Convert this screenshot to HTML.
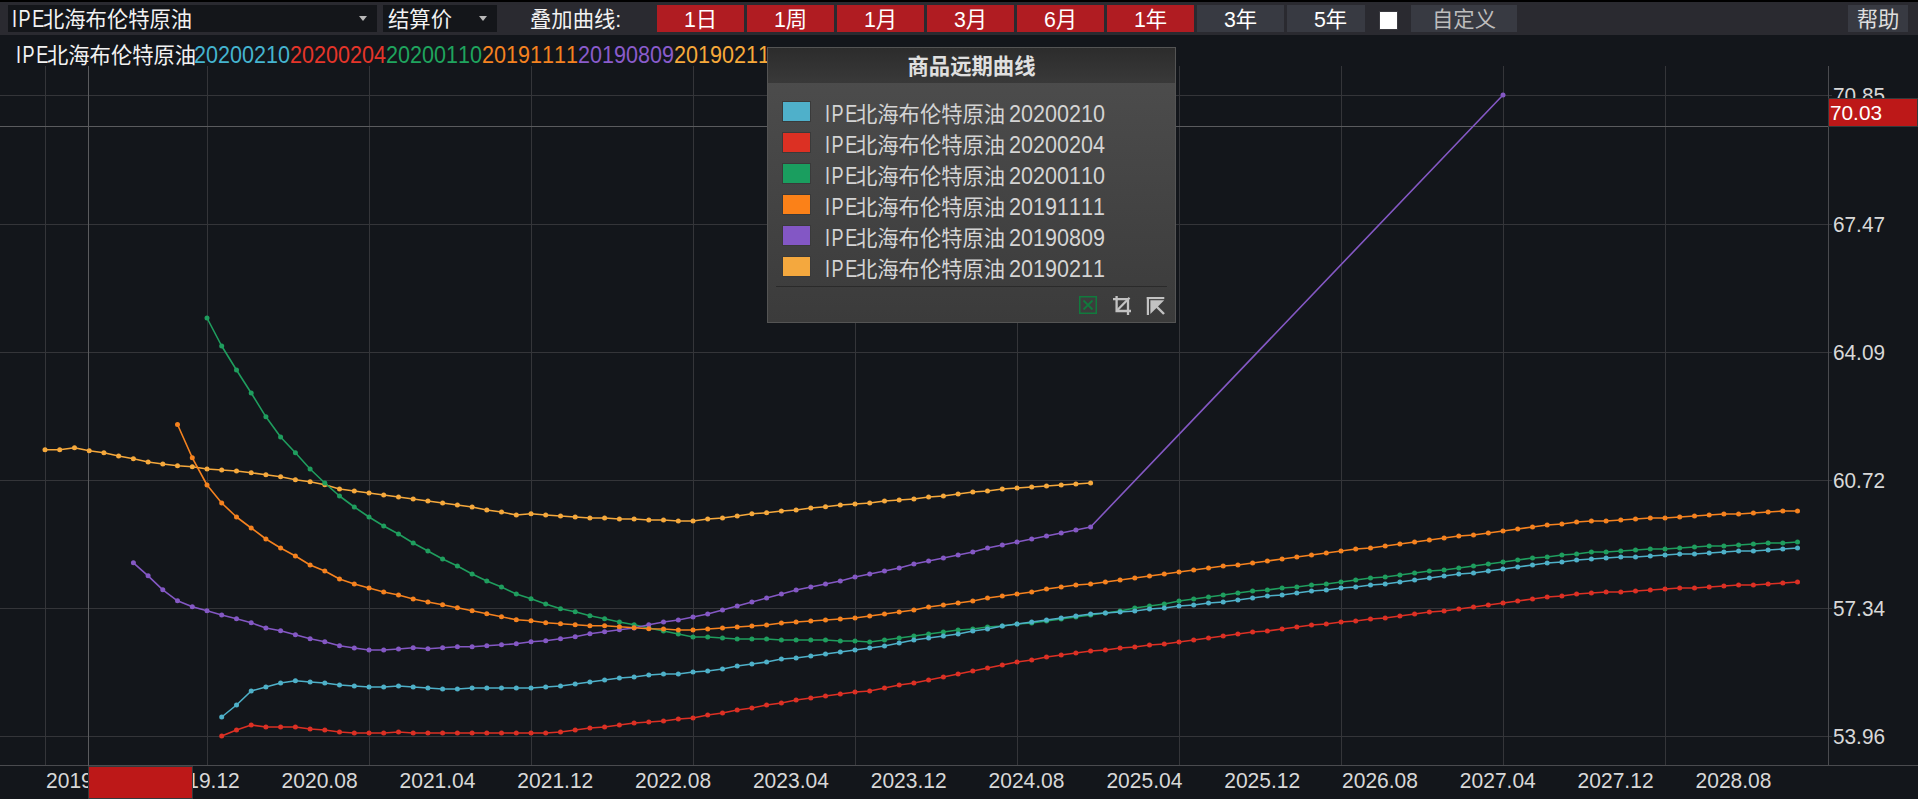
<!DOCTYPE html>
<html lang="zh-CN"><head><meta charset="utf-8"><title>商品远期曲线</title>
<style>

html,body{margin:0;padding:0;}
body{width:1918px;height:799px;overflow:hidden;background:#13161b;position:relative;
 font-family:"Liberation Sans","Noto Sans CJK SC",sans-serif;font-size:21.33px;color:#f2f2f2;font-kerning:none;}
.abs{position:absolute;white-space:nowrap;}
#topline{left:0;top:0;width:1918px;height:2px;background:#000;}
#toolbar{left:0;top:2px;width:1918px;height:33px;background:#2a2a30;}
.dd{background:#14161a;top:5px;height:27px;line-height:31px;}
.btn{top:5px;height:27px;line-height:31px;text-align:center;color:#fff;}
.red{background:#b01c22;}
.gray{background:#383a42;}
.arrow{width:0;height:0;border-left:4.7px solid transparent;border-right:4.7px solid transparent;border-top:5.5px solid #b8b8b8;}
.lbl{top:43px;height:27px;line-height:27px;}
.lat{display:inline-block;font-size:23.5px;letter-spacing:2px;transform:scaleX(.77);transform-origin:0 50%;margin-right:-13px;line-height:1;}
.dt{font-size:23.2px;}
.n{display:inline-block;font-size:23.2px;transform:scaleX(.93);transform-origin:0 50%;margin-right:-7.2px;line-height:1;}

.lg{left:57px;height:31px;line-height:31px;color:#d4d4d4;word-spacing:-2px;}
.sw{left:14px;width:27px;height:19px;border:1px solid #3a3a3a;}
svg text{font-family:"Liberation Sans","Noto Sans CJK SC",sans-serif;font-size:22.2px;font-kerning:none;}

</style></head><body>
<div class="abs" id="topline"></div>
<div class="abs" id="toolbar"></div>
<div class="abs dd" style="left:8px;width:369px;"><span class="abs" id="dd1" style="left:4px;top:0;"><span class="lat">IPE</span>北海布伦特原油</span><div class="abs arrow" style="left:351px;top:11px;"></div></div>
<div class="abs dd" style="left:383px;width:114px;"><span class="abs" id="dd2" style="left:5px;top:0;">结算价</span><div class="abs arrow" style="left:96px;top:11px;"></div></div>
<div class="abs" id="ovl" style="left:530px;top:5px;height:27px;line-height:31px;">叠加曲线:</div>
<div class="abs btn red" style="left:657px;width:87px;">1日</div>
<div class="abs btn red" style="left:747px;width:87px;">1周</div>
<div class="abs btn red" style="left:837px;width:87px;">1月</div>
<div class="abs btn red" style="left:927px;width:87px;">3月</div>
<div class="abs btn red" style="left:1017px;width:87px;">6月</div>
<div class="abs btn red" style="left:1107px;width:87px;">1年</div>
<div class="abs btn gray" style="left:1197px;width:87px;">3年</div>
<div class="abs btn gray" style="left:1287px;width:78px;overflow:hidden;"><div style="width:87px;">5年</div></div>
<div class="abs" style="left:1380px;top:12px;width:17px;height:17px;background:#fff;box-shadow:0 0 0 1px #3a3a40;"></div>
<div class="abs btn gray" style="left:1411px;width:106px;color:#bdbdbd;">自定义</div>
<div class="abs btn gray" style="left:1848px;width:60px;color:#dedede;">帮助</div>
<svg class="abs" style="left:0;top:0;" width="1918" height="799" viewBox="0 0 1918 799">
<rect x="45" y="66" width="1" height="700" fill="#343539"/>
<rect x="207" y="66" width="1" height="700" fill="#343539"/>
<rect x="369" y="66" width="1" height="700" fill="#343539"/>
<rect x="531" y="66" width="1" height="700" fill="#343539"/>
<rect x="693" y="66" width="1" height="700" fill="#343539"/>
<rect x="855" y="66" width="1" height="700" fill="#343539"/>
<rect x="1017" y="66" width="1" height="700" fill="#343539"/>
<rect x="1179" y="66" width="1" height="700" fill="#343539"/>
<rect x="1341" y="66" width="1" height="700" fill="#343539"/>
<rect x="1503" y="66" width="1" height="700" fill="#343539"/>
<rect x="1665" y="66" width="1" height="700" fill="#343539"/>
<rect x="0" y="95" width="1832" height="1" fill="#343539"/>
<rect x="0" y="224" width="1832" height="1" fill="#343539"/>
<rect x="0" y="352" width="1832" height="1" fill="#343539"/>
<rect x="0" y="480" width="1832" height="1" fill="#343539"/>
<rect x="0" y="608" width="1832" height="1" fill="#343539"/>
<rect x="0" y="736" width="1832" height="1" fill="#343539"/>
<rect x="1828" y="66" width="1" height="700" fill="#4a4b4f"/>
<rect x="0" y="765" width="1918" height="1" fill="#4a4b4f"/>
<rect x="88" y="66" width="1" height="700" fill="#5a5b5e"/>
<rect x="0" y="126" width="1829" height="1" fill="#5a5b5e"/>
<g fill="#f5a83c" stroke="none"><polyline points="45.0,449.8 59.7,449.8 74.5,447.8 89.2,450.8 103.9,452.8 118.6,456.0 133.4,458.8 148.1,462.0 162.8,464.0 177.5,465.8 192.3,466.8 207.0,469.0 221.7,470.0 236.5,471.0 251.2,472.8 265.9,474.8 280.6,476.8 295.4,479.8 310.1,481.8 324.8,484.8 339.5,489.0 354.3,491.0 369.0,493.0 383.7,495.0 398.5,497.0 413.2,499.0 427.9,501.0 442.6,503.0 457.4,505.0 472.1,507.0 486.8,510.0 501.5,512.0 516.3,515.0 531.0,513.8 545.7,515.0 560.5,516.0 575.2,517.0 589.9,518.0 604.6,518.0 619.4,519.0 634.1,519.0 648.8,520.0 663.5,520.0 678.3,521.0 693.0,521.0 707.7,519.0 722.5,518.0 737.2,516.0 751.9,513.8 766.6,512.8 781.4,511.0 796.1,510.0 810.8,508.0 825.5,506.8 840.3,505.0 855.0,504.0 869.7,503.0 884.5,501.0 899.2,500.0 913.9,499.0 928.6,497.0 943.4,496.0 958.1,494.0 972.8,492.0 987.5,491.0 1002.3,489.0 1017.0,488.0 1031.7,487.0 1046.5,486.0 1061.2,485.0 1075.9,484.0 1090.6,483.0" fill="none" stroke="#f5a83c" stroke-width="1.6" stroke-linejoin="round"/>
<circle cx="45.0" cy="449.8" r="2.5"/><circle cx="59.7" cy="449.8" r="2.5"/><circle cx="74.5" cy="447.8" r="2.5"/><circle cx="89.2" cy="450.8" r="2.5"/><circle cx="103.9" cy="452.8" r="2.5"/><circle cx="118.6" cy="456.0" r="2.5"/><circle cx="133.4" cy="458.8" r="2.5"/><circle cx="148.1" cy="462.0" r="2.5"/><circle cx="162.8" cy="464.0" r="2.5"/><circle cx="177.5" cy="465.8" r="2.5"/><circle cx="192.3" cy="466.8" r="2.5"/><circle cx="207.0" cy="469.0" r="2.5"/><circle cx="221.7" cy="470.0" r="2.5"/><circle cx="236.5" cy="471.0" r="2.5"/><circle cx="251.2" cy="472.8" r="2.5"/><circle cx="265.9" cy="474.8" r="2.5"/><circle cx="280.6" cy="476.8" r="2.5"/><circle cx="295.4" cy="479.8" r="2.5"/><circle cx="310.1" cy="481.8" r="2.5"/><circle cx="324.8" cy="484.8" r="2.5"/><circle cx="339.5" cy="489.0" r="2.5"/><circle cx="354.3" cy="491.0" r="2.5"/><circle cx="369.0" cy="493.0" r="2.5"/><circle cx="383.7" cy="495.0" r="2.5"/><circle cx="398.5" cy="497.0" r="2.5"/><circle cx="413.2" cy="499.0" r="2.5"/><circle cx="427.9" cy="501.0" r="2.5"/><circle cx="442.6" cy="503.0" r="2.5"/><circle cx="457.4" cy="505.0" r="2.5"/><circle cx="472.1" cy="507.0" r="2.5"/><circle cx="486.8" cy="510.0" r="2.5"/><circle cx="501.5" cy="512.0" r="2.5"/><circle cx="516.3" cy="515.0" r="2.5"/><circle cx="531.0" cy="513.8" r="2.5"/><circle cx="545.7" cy="515.0" r="2.5"/><circle cx="560.5" cy="516.0" r="2.5"/><circle cx="575.2" cy="517.0" r="2.5"/><circle cx="589.9" cy="518.0" r="2.5"/><circle cx="604.6" cy="518.0" r="2.5"/><circle cx="619.4" cy="519.0" r="2.5"/><circle cx="634.1" cy="519.0" r="2.5"/><circle cx="648.8" cy="520.0" r="2.5"/><circle cx="663.5" cy="520.0" r="2.5"/><circle cx="678.3" cy="521.0" r="2.5"/><circle cx="693.0" cy="521.0" r="2.5"/><circle cx="707.7" cy="519.0" r="2.5"/><circle cx="722.5" cy="518.0" r="2.5"/><circle cx="737.2" cy="516.0" r="2.5"/><circle cx="751.9" cy="513.8" r="2.5"/><circle cx="766.6" cy="512.8" r="2.5"/><circle cx="781.4" cy="511.0" r="2.5"/><circle cx="796.1" cy="510.0" r="2.5"/><circle cx="810.8" cy="508.0" r="2.5"/><circle cx="825.5" cy="506.8" r="2.5"/><circle cx="840.3" cy="505.0" r="2.5"/><circle cx="855.0" cy="504.0" r="2.5"/><circle cx="869.7" cy="503.0" r="2.5"/><circle cx="884.5" cy="501.0" r="2.5"/><circle cx="899.2" cy="500.0" r="2.5"/><circle cx="913.9" cy="499.0" r="2.5"/><circle cx="928.6" cy="497.0" r="2.5"/><circle cx="943.4" cy="496.0" r="2.5"/><circle cx="958.1" cy="494.0" r="2.5"/><circle cx="972.8" cy="492.0" r="2.5"/><circle cx="987.5" cy="491.0" r="2.5"/><circle cx="1002.3" cy="489.0" r="2.5"/><circle cx="1017.0" cy="488.0" r="2.5"/><circle cx="1031.7" cy="487.0" r="2.5"/><circle cx="1046.5" cy="486.0" r="2.5"/><circle cx="1061.2" cy="485.0" r="2.5"/><circle cx="1075.9" cy="484.0" r="2.5"/><circle cx="1090.6" cy="483.0" r="2.5"/>
</g>
<g fill="#1f9d5e" stroke="none"><polyline points="207.0,318.0 221.7,346.0 236.5,370.0 251.2,393.0 265.9,416.8 280.6,437.0 295.4,452.8 310.1,469.0 324.8,483.0 339.5,496.0 354.3,507.0 369.0,517.0 383.7,526.0 398.5,534.0 413.2,543.0 427.9,551.0 442.6,559.0 457.4,566.0 472.1,574.0 486.8,581.0 501.5,587.0 516.3,594.0 531.0,598.8 545.7,604.0 560.5,608.8 575.2,611.8 589.9,615.8 604.6,618.8 619.4,622.0 634.1,624.8 648.8,628.0 663.5,631.0 678.3,634.0 693.0,637.0 707.7,637.0 722.5,638.0 737.2,639.0 751.9,639.0 766.6,639.0 781.4,640.0 796.1,640.0 810.8,640.0 825.5,640.0 840.3,641.0 855.0,641.0 869.7,642.0 884.5,640.0 899.2,638.0 913.9,636.0 928.6,634.0 943.4,632.0 958.1,630.0 972.8,629.0 987.5,627.0 1002.3,626.0 1017.0,624.0 1031.7,623.0 1046.5,621.0 1061.2,619.0 1075.9,617.0 1090.6,615.0 1105.4,613.0 1120.1,611.0 1134.8,608.0 1149.5,606.0 1164.3,604.0 1179.0,601.0 1193.7,599.0 1208.5,597.0 1223.2,595.0 1237.9,593.0 1252.6,591.0 1267.4,590.0 1282.1,588.0 1296.8,587.0 1311.5,585.0 1326.3,584.0 1341.0,582.0 1355.7,580.0 1370.5,578.0 1385.2,577.0 1399.9,575.0 1414.6,573.0 1429.4,571.0 1444.1,570.0 1458.8,568.0 1473.5,566.0 1488.3,564.0 1503.0,562.0 1517.7,560.0 1532.5,558.0 1547.2,557.0 1561.9,555.0 1576.6,554.0 1591.4,552.0 1606.1,552.0 1620.8,551.0 1635.5,550.0 1650.3,549.0 1665.0,549.0 1679.7,548.0 1694.5,547.0 1709.2,546.0 1723.9,546.0 1738.6,545.0 1753.4,544.0 1768.1,543.0 1782.8,543.0 1797.5,542.0" fill="none" stroke="#1f9d5e" stroke-width="1.6" stroke-linejoin="round"/>
<circle cx="207.0" cy="318.0" r="2.5"/><circle cx="221.7" cy="346.0" r="2.5"/><circle cx="236.5" cy="370.0" r="2.5"/><circle cx="251.2" cy="393.0" r="2.5"/><circle cx="265.9" cy="416.8" r="2.5"/><circle cx="280.6" cy="437.0" r="2.5"/><circle cx="295.4" cy="452.8" r="2.5"/><circle cx="310.1" cy="469.0" r="2.5"/><circle cx="324.8" cy="483.0" r="2.5"/><circle cx="339.5" cy="496.0" r="2.5"/><circle cx="354.3" cy="507.0" r="2.5"/><circle cx="369.0" cy="517.0" r="2.5"/><circle cx="383.7" cy="526.0" r="2.5"/><circle cx="398.5" cy="534.0" r="2.5"/><circle cx="413.2" cy="543.0" r="2.5"/><circle cx="427.9" cy="551.0" r="2.5"/><circle cx="442.6" cy="559.0" r="2.5"/><circle cx="457.4" cy="566.0" r="2.5"/><circle cx="472.1" cy="574.0" r="2.5"/><circle cx="486.8" cy="581.0" r="2.5"/><circle cx="501.5" cy="587.0" r="2.5"/><circle cx="516.3" cy="594.0" r="2.5"/><circle cx="531.0" cy="598.8" r="2.5"/><circle cx="545.7" cy="604.0" r="2.5"/><circle cx="560.5" cy="608.8" r="2.5"/><circle cx="575.2" cy="611.8" r="2.5"/><circle cx="589.9" cy="615.8" r="2.5"/><circle cx="604.6" cy="618.8" r="2.5"/><circle cx="619.4" cy="622.0" r="2.5"/><circle cx="634.1" cy="624.8" r="2.5"/><circle cx="648.8" cy="628.0" r="2.5"/><circle cx="663.5" cy="631.0" r="2.5"/><circle cx="678.3" cy="634.0" r="2.5"/><circle cx="693.0" cy="637.0" r="2.5"/><circle cx="707.7" cy="637.0" r="2.5"/><circle cx="722.5" cy="638.0" r="2.5"/><circle cx="737.2" cy="639.0" r="2.5"/><circle cx="751.9" cy="639.0" r="2.5"/><circle cx="766.6" cy="639.0" r="2.5"/><circle cx="781.4" cy="640.0" r="2.5"/><circle cx="796.1" cy="640.0" r="2.5"/><circle cx="810.8" cy="640.0" r="2.5"/><circle cx="825.5" cy="640.0" r="2.5"/><circle cx="840.3" cy="641.0" r="2.5"/><circle cx="855.0" cy="641.0" r="2.5"/><circle cx="869.7" cy="642.0" r="2.5"/><circle cx="884.5" cy="640.0" r="2.5"/><circle cx="899.2" cy="638.0" r="2.5"/><circle cx="913.9" cy="636.0" r="2.5"/><circle cx="928.6" cy="634.0" r="2.5"/><circle cx="943.4" cy="632.0" r="2.5"/><circle cx="958.1" cy="630.0" r="2.5"/><circle cx="972.8" cy="629.0" r="2.5"/><circle cx="987.5" cy="627.0" r="2.5"/><circle cx="1002.3" cy="626.0" r="2.5"/><circle cx="1017.0" cy="624.0" r="2.5"/><circle cx="1031.7" cy="623.0" r="2.5"/><circle cx="1046.5" cy="621.0" r="2.5"/><circle cx="1061.2" cy="619.0" r="2.5"/><circle cx="1075.9" cy="617.0" r="2.5"/><circle cx="1090.6" cy="615.0" r="2.5"/><circle cx="1105.4" cy="613.0" r="2.5"/><circle cx="1120.1" cy="611.0" r="2.5"/><circle cx="1134.8" cy="608.0" r="2.5"/><circle cx="1149.5" cy="606.0" r="2.5"/><circle cx="1164.3" cy="604.0" r="2.5"/><circle cx="1179.0" cy="601.0" r="2.5"/><circle cx="1193.7" cy="599.0" r="2.5"/><circle cx="1208.5" cy="597.0" r="2.5"/><circle cx="1223.2" cy="595.0" r="2.5"/><circle cx="1237.9" cy="593.0" r="2.5"/><circle cx="1252.6" cy="591.0" r="2.5"/><circle cx="1267.4" cy="590.0" r="2.5"/><circle cx="1282.1" cy="588.0" r="2.5"/><circle cx="1296.8" cy="587.0" r="2.5"/><circle cx="1311.5" cy="585.0" r="2.5"/><circle cx="1326.3" cy="584.0" r="2.5"/><circle cx="1341.0" cy="582.0" r="2.5"/><circle cx="1355.7" cy="580.0" r="2.5"/><circle cx="1370.5" cy="578.0" r="2.5"/><circle cx="1385.2" cy="577.0" r="2.5"/><circle cx="1399.9" cy="575.0" r="2.5"/><circle cx="1414.6" cy="573.0" r="2.5"/><circle cx="1429.4" cy="571.0" r="2.5"/><circle cx="1444.1" cy="570.0" r="2.5"/><circle cx="1458.8" cy="568.0" r="2.5"/><circle cx="1473.5" cy="566.0" r="2.5"/><circle cx="1488.3" cy="564.0" r="2.5"/><circle cx="1503.0" cy="562.0" r="2.5"/><circle cx="1517.7" cy="560.0" r="2.5"/><circle cx="1532.5" cy="558.0" r="2.5"/><circle cx="1547.2" cy="557.0" r="2.5"/><circle cx="1561.9" cy="555.0" r="2.5"/><circle cx="1576.6" cy="554.0" r="2.5"/><circle cx="1591.4" cy="552.0" r="2.5"/><circle cx="1606.1" cy="552.0" r="2.5"/><circle cx="1620.8" cy="551.0" r="2.5"/><circle cx="1635.5" cy="550.0" r="2.5"/><circle cx="1650.3" cy="549.0" r="2.5"/><circle cx="1665.0" cy="549.0" r="2.5"/><circle cx="1679.7" cy="548.0" r="2.5"/><circle cx="1694.5" cy="547.0" r="2.5"/><circle cx="1709.2" cy="546.0" r="2.5"/><circle cx="1723.9" cy="546.0" r="2.5"/><circle cx="1738.6" cy="545.0" r="2.5"/><circle cx="1753.4" cy="544.0" r="2.5"/><circle cx="1768.1" cy="543.0" r="2.5"/><circle cx="1782.8" cy="543.0" r="2.5"/><circle cx="1797.5" cy="542.0" r="2.5"/>
</g>
<g fill="#8458c4" stroke="none"><polyline points="133.4,562.8 148.1,575.8 162.8,589.8 177.5,600.8 192.3,606.8 207.0,610.8 221.7,615.0 236.5,618.8 251.2,622.8 265.9,628.0 280.6,630.8 295.4,634.8 310.1,638.8 324.8,641.8 339.5,645.8 354.3,648.0 369.0,650.0 383.7,650.0 398.5,649.0 413.2,647.8 427.9,648.8 442.6,647.8 457.4,646.8 472.1,646.8 486.8,645.8 501.5,644.8 516.3,643.8 531.0,641.8 545.7,640.8 560.5,638.8 575.2,636.8 589.9,633.8 604.6,631.8 619.4,629.8 634.1,628.0 648.8,624.8 663.5,622.0 678.3,620.0 693.0,617.0 707.7,614.0 722.5,610.0 737.2,606.0 751.9,602.0 766.6,598.0 781.4,594.0 796.1,590.0 810.8,587.0 825.5,584.0 840.3,581.0 855.0,577.0 869.7,574.0 884.5,571.0 899.2,568.0 913.9,564.0 928.6,561.0 943.4,558.0 958.1,555.0 972.8,552.0 987.5,548.0 1002.3,545.0 1017.0,542.0 1031.7,539.0 1046.5,536.0 1061.2,533.0 1075.9,530.0 1090.6,527.0 1503.0,95.0" fill="none" stroke="#8458c4" stroke-width="1.6" stroke-linejoin="round"/>
<circle cx="133.4" cy="562.8" r="2.5"/><circle cx="148.1" cy="575.8" r="2.5"/><circle cx="162.8" cy="589.8" r="2.5"/><circle cx="177.5" cy="600.8" r="2.5"/><circle cx="192.3" cy="606.8" r="2.5"/><circle cx="207.0" cy="610.8" r="2.5"/><circle cx="221.7" cy="615.0" r="2.5"/><circle cx="236.5" cy="618.8" r="2.5"/><circle cx="251.2" cy="622.8" r="2.5"/><circle cx="265.9" cy="628.0" r="2.5"/><circle cx="280.6" cy="630.8" r="2.5"/><circle cx="295.4" cy="634.8" r="2.5"/><circle cx="310.1" cy="638.8" r="2.5"/><circle cx="324.8" cy="641.8" r="2.5"/><circle cx="339.5" cy="645.8" r="2.5"/><circle cx="354.3" cy="648.0" r="2.5"/><circle cx="369.0" cy="650.0" r="2.5"/><circle cx="383.7" cy="650.0" r="2.5"/><circle cx="398.5" cy="649.0" r="2.5"/><circle cx="413.2" cy="647.8" r="2.5"/><circle cx="427.9" cy="648.8" r="2.5"/><circle cx="442.6" cy="647.8" r="2.5"/><circle cx="457.4" cy="646.8" r="2.5"/><circle cx="472.1" cy="646.8" r="2.5"/><circle cx="486.8" cy="645.8" r="2.5"/><circle cx="501.5" cy="644.8" r="2.5"/><circle cx="516.3" cy="643.8" r="2.5"/><circle cx="531.0" cy="641.8" r="2.5"/><circle cx="545.7" cy="640.8" r="2.5"/><circle cx="560.5" cy="638.8" r="2.5"/><circle cx="575.2" cy="636.8" r="2.5"/><circle cx="589.9" cy="633.8" r="2.5"/><circle cx="604.6" cy="631.8" r="2.5"/><circle cx="619.4" cy="629.8" r="2.5"/><circle cx="634.1" cy="628.0" r="2.5"/><circle cx="648.8" cy="624.8" r="2.5"/><circle cx="663.5" cy="622.0" r="2.5"/><circle cx="678.3" cy="620.0" r="2.5"/><circle cx="693.0" cy="617.0" r="2.5"/><circle cx="707.7" cy="614.0" r="2.5"/><circle cx="722.5" cy="610.0" r="2.5"/><circle cx="737.2" cy="606.0" r="2.5"/><circle cx="751.9" cy="602.0" r="2.5"/><circle cx="766.6" cy="598.0" r="2.5"/><circle cx="781.4" cy="594.0" r="2.5"/><circle cx="796.1" cy="590.0" r="2.5"/><circle cx="810.8" cy="587.0" r="2.5"/><circle cx="825.5" cy="584.0" r="2.5"/><circle cx="840.3" cy="581.0" r="2.5"/><circle cx="855.0" cy="577.0" r="2.5"/><circle cx="869.7" cy="574.0" r="2.5"/><circle cx="884.5" cy="571.0" r="2.5"/><circle cx="899.2" cy="568.0" r="2.5"/><circle cx="913.9" cy="564.0" r="2.5"/><circle cx="928.6" cy="561.0" r="2.5"/><circle cx="943.4" cy="558.0" r="2.5"/><circle cx="958.1" cy="555.0" r="2.5"/><circle cx="972.8" cy="552.0" r="2.5"/><circle cx="987.5" cy="548.0" r="2.5"/><circle cx="1002.3" cy="545.0" r="2.5"/><circle cx="1017.0" cy="542.0" r="2.5"/><circle cx="1031.7" cy="539.0" r="2.5"/><circle cx="1046.5" cy="536.0" r="2.5"/><circle cx="1061.2" cy="533.0" r="2.5"/><circle cx="1075.9" cy="530.0" r="2.5"/><circle cx="1090.6" cy="527.0" r="2.5"/><circle cx="1503.0" cy="95.0" r="2.5"/>
</g>
<g fill="#dc3024" stroke="none"><polyline points="221.7,736.0 236.5,730.0 251.2,725.0 265.9,727.0 280.6,727.0 295.4,727.0 310.1,729.0 324.8,730.0 339.5,732.0 354.3,733.0 369.0,733.0 383.7,733.0 398.5,732.0 413.2,733.0 427.9,733.0 442.6,733.0 457.4,733.0 472.1,733.0 486.8,733.0 501.5,733.0 516.3,733.0 531.0,733.0 545.7,733.0 560.5,732.0 575.2,730.0 589.9,728.0 604.6,727.0 619.4,725.0 634.1,723.0 648.8,722.0 663.5,721.0 678.3,719.0 693.0,718.0 707.7,715.0 722.5,713.0 737.2,710.0 751.9,708.0 766.6,705.0 781.4,703.0 796.1,700.0 810.8,698.0 825.5,696.0 840.3,694.0 855.0,692.0 869.7,691.0 884.5,688.0 899.2,685.0 913.9,683.0 928.6,680.0 943.4,677.0 958.1,674.0 972.8,671.0 987.5,668.0 1002.3,665.0 1017.0,662.0 1031.7,660.0 1046.5,657.0 1061.2,655.0 1075.9,653.0 1090.6,651.0 1105.4,650.0 1120.1,648.0 1134.8,647.0 1149.5,645.0 1164.3,644.0 1179.0,642.0 1193.7,640.0 1208.5,638.0 1223.2,636.0 1237.9,634.0 1252.6,632.0 1267.4,631.0 1282.1,629.0 1296.8,627.0 1311.5,625.0 1326.3,624.0 1341.0,622.0 1355.7,621.0 1370.5,619.0 1385.2,618.0 1399.9,616.0 1414.6,614.0 1429.4,612.0 1444.1,611.0 1458.8,609.0 1473.5,607.0 1488.3,605.0 1503.0,603.0 1517.7,601.0 1532.5,599.0 1547.2,597.0 1561.9,596.0 1576.6,594.0 1591.4,593.0 1606.1,592.0 1620.8,592.0 1635.5,591.0 1650.3,590.0 1665.0,589.0 1679.7,588.0 1694.5,588.0 1709.2,587.0 1723.9,586.0 1738.6,585.0 1753.4,585.0 1768.1,584.0 1782.8,583.0 1797.5,582.0" fill="none" stroke="#dc3024" stroke-width="1.6" stroke-linejoin="round"/>
<circle cx="221.7" cy="736.0" r="2.5"/><circle cx="236.5" cy="730.0" r="2.5"/><circle cx="251.2" cy="725.0" r="2.5"/><circle cx="265.9" cy="727.0" r="2.5"/><circle cx="280.6" cy="727.0" r="2.5"/><circle cx="295.4" cy="727.0" r="2.5"/><circle cx="310.1" cy="729.0" r="2.5"/><circle cx="324.8" cy="730.0" r="2.5"/><circle cx="339.5" cy="732.0" r="2.5"/><circle cx="354.3" cy="733.0" r="2.5"/><circle cx="369.0" cy="733.0" r="2.5"/><circle cx="383.7" cy="733.0" r="2.5"/><circle cx="398.5" cy="732.0" r="2.5"/><circle cx="413.2" cy="733.0" r="2.5"/><circle cx="427.9" cy="733.0" r="2.5"/><circle cx="442.6" cy="733.0" r="2.5"/><circle cx="457.4" cy="733.0" r="2.5"/><circle cx="472.1" cy="733.0" r="2.5"/><circle cx="486.8" cy="733.0" r="2.5"/><circle cx="501.5" cy="733.0" r="2.5"/><circle cx="516.3" cy="733.0" r="2.5"/><circle cx="531.0" cy="733.0" r="2.5"/><circle cx="545.7" cy="733.0" r="2.5"/><circle cx="560.5" cy="732.0" r="2.5"/><circle cx="575.2" cy="730.0" r="2.5"/><circle cx="589.9" cy="728.0" r="2.5"/><circle cx="604.6" cy="727.0" r="2.5"/><circle cx="619.4" cy="725.0" r="2.5"/><circle cx="634.1" cy="723.0" r="2.5"/><circle cx="648.8" cy="722.0" r="2.5"/><circle cx="663.5" cy="721.0" r="2.5"/><circle cx="678.3" cy="719.0" r="2.5"/><circle cx="693.0" cy="718.0" r="2.5"/><circle cx="707.7" cy="715.0" r="2.5"/><circle cx="722.5" cy="713.0" r="2.5"/><circle cx="737.2" cy="710.0" r="2.5"/><circle cx="751.9" cy="708.0" r="2.5"/><circle cx="766.6" cy="705.0" r="2.5"/><circle cx="781.4" cy="703.0" r="2.5"/><circle cx="796.1" cy="700.0" r="2.5"/><circle cx="810.8" cy="698.0" r="2.5"/><circle cx="825.5" cy="696.0" r="2.5"/><circle cx="840.3" cy="694.0" r="2.5"/><circle cx="855.0" cy="692.0" r="2.5"/><circle cx="869.7" cy="691.0" r="2.5"/><circle cx="884.5" cy="688.0" r="2.5"/><circle cx="899.2" cy="685.0" r="2.5"/><circle cx="913.9" cy="683.0" r="2.5"/><circle cx="928.6" cy="680.0" r="2.5"/><circle cx="943.4" cy="677.0" r="2.5"/><circle cx="958.1" cy="674.0" r="2.5"/><circle cx="972.8" cy="671.0" r="2.5"/><circle cx="987.5" cy="668.0" r="2.5"/><circle cx="1002.3" cy="665.0" r="2.5"/><circle cx="1017.0" cy="662.0" r="2.5"/><circle cx="1031.7" cy="660.0" r="2.5"/><circle cx="1046.5" cy="657.0" r="2.5"/><circle cx="1061.2" cy="655.0" r="2.5"/><circle cx="1075.9" cy="653.0" r="2.5"/><circle cx="1090.6" cy="651.0" r="2.5"/><circle cx="1105.4" cy="650.0" r="2.5"/><circle cx="1120.1" cy="648.0" r="2.5"/><circle cx="1134.8" cy="647.0" r="2.5"/><circle cx="1149.5" cy="645.0" r="2.5"/><circle cx="1164.3" cy="644.0" r="2.5"/><circle cx="1179.0" cy="642.0" r="2.5"/><circle cx="1193.7" cy="640.0" r="2.5"/><circle cx="1208.5" cy="638.0" r="2.5"/><circle cx="1223.2" cy="636.0" r="2.5"/><circle cx="1237.9" cy="634.0" r="2.5"/><circle cx="1252.6" cy="632.0" r="2.5"/><circle cx="1267.4" cy="631.0" r="2.5"/><circle cx="1282.1" cy="629.0" r="2.5"/><circle cx="1296.8" cy="627.0" r="2.5"/><circle cx="1311.5" cy="625.0" r="2.5"/><circle cx="1326.3" cy="624.0" r="2.5"/><circle cx="1341.0" cy="622.0" r="2.5"/><circle cx="1355.7" cy="621.0" r="2.5"/><circle cx="1370.5" cy="619.0" r="2.5"/><circle cx="1385.2" cy="618.0" r="2.5"/><circle cx="1399.9" cy="616.0" r="2.5"/><circle cx="1414.6" cy="614.0" r="2.5"/><circle cx="1429.4" cy="612.0" r="2.5"/><circle cx="1444.1" cy="611.0" r="2.5"/><circle cx="1458.8" cy="609.0" r="2.5"/><circle cx="1473.5" cy="607.0" r="2.5"/><circle cx="1488.3" cy="605.0" r="2.5"/><circle cx="1503.0" cy="603.0" r="2.5"/><circle cx="1517.7" cy="601.0" r="2.5"/><circle cx="1532.5" cy="599.0" r="2.5"/><circle cx="1547.2" cy="597.0" r="2.5"/><circle cx="1561.9" cy="596.0" r="2.5"/><circle cx="1576.6" cy="594.0" r="2.5"/><circle cx="1591.4" cy="593.0" r="2.5"/><circle cx="1606.1" cy="592.0" r="2.5"/><circle cx="1620.8" cy="592.0" r="2.5"/><circle cx="1635.5" cy="591.0" r="2.5"/><circle cx="1650.3" cy="590.0" r="2.5"/><circle cx="1665.0" cy="589.0" r="2.5"/><circle cx="1679.7" cy="588.0" r="2.5"/><circle cx="1694.5" cy="588.0" r="2.5"/><circle cx="1709.2" cy="587.0" r="2.5"/><circle cx="1723.9" cy="586.0" r="2.5"/><circle cx="1738.6" cy="585.0" r="2.5"/><circle cx="1753.4" cy="585.0" r="2.5"/><circle cx="1768.1" cy="584.0" r="2.5"/><circle cx="1782.8" cy="583.0" r="2.5"/><circle cx="1797.5" cy="582.0" r="2.5"/>
</g>
<g fill="#f5821f" stroke="none"><polyline points="177.5,424.5 192.3,457.8 207.0,485.0 221.7,503.0 236.5,517.0 251.2,528.0 265.9,539.0 280.6,548.0 295.4,556.0 310.1,565.0 324.8,571.0 339.5,579.0 354.3,584.0 369.0,588.0 383.7,592.0 398.5,595.0 413.2,599.0 427.9,602.0 442.6,604.8 457.4,607.8 472.1,610.8 486.8,613.8 501.5,616.8 516.3,619.8 531.0,620.8 545.7,622.8 560.5,623.8 575.2,624.8 589.9,625.8 604.6,625.8 619.4,626.8 634.1,627.8 648.8,628.8 663.5,629.0 678.3,630.0 693.0,630.0 707.7,629.0 722.5,628.0 737.2,627.0 751.9,626.0 766.6,625.0 781.4,623.0 796.1,622.0 810.8,621.0 825.5,620.0 840.3,619.0 855.0,618.0 869.7,616.0 884.5,614.0 899.2,612.0 913.9,610.0 928.6,607.0 943.4,605.0 958.1,603.0 972.8,601.0 987.5,598.0 1002.3,596.0 1017.0,594.0 1031.7,592.0 1046.5,589.0 1061.2,587.0 1075.9,585.0 1090.6,584.0 1105.4,582.0 1120.1,580.0 1134.8,578.0 1149.5,576.0 1164.3,574.0 1179.0,572.0 1193.7,570.0 1208.5,568.0 1223.2,566.0 1237.9,565.0 1252.6,563.0 1267.4,561.0 1282.1,559.0 1296.8,557.0 1311.5,555.0 1326.3,553.0 1341.0,551.0 1355.7,549.0 1370.5,548.0 1385.2,546.0 1399.9,544.0 1414.6,542.0 1429.4,540.0 1444.1,538.0 1458.8,536.0 1473.5,535.0 1488.3,533.0 1503.0,531.0 1517.7,529.0 1532.5,527.0 1547.2,525.0 1561.9,524.0 1576.6,522.0 1591.4,521.0 1606.1,521.0 1620.8,520.0 1635.5,519.0 1650.3,518.0 1665.0,518.0 1679.7,517.0 1694.5,516.0 1709.2,515.0 1723.9,514.0 1738.6,514.0 1753.4,513.0 1768.1,512.0 1782.8,511.0 1797.5,511.0" fill="none" stroke="#f5821f" stroke-width="1.6" stroke-linejoin="round"/>
<circle cx="177.5" cy="424.5" r="2.5"/><circle cx="192.3" cy="457.8" r="2.5"/><circle cx="207.0" cy="485.0" r="2.5"/><circle cx="221.7" cy="503.0" r="2.5"/><circle cx="236.5" cy="517.0" r="2.5"/><circle cx="251.2" cy="528.0" r="2.5"/><circle cx="265.9" cy="539.0" r="2.5"/><circle cx="280.6" cy="548.0" r="2.5"/><circle cx="295.4" cy="556.0" r="2.5"/><circle cx="310.1" cy="565.0" r="2.5"/><circle cx="324.8" cy="571.0" r="2.5"/><circle cx="339.5" cy="579.0" r="2.5"/><circle cx="354.3" cy="584.0" r="2.5"/><circle cx="369.0" cy="588.0" r="2.5"/><circle cx="383.7" cy="592.0" r="2.5"/><circle cx="398.5" cy="595.0" r="2.5"/><circle cx="413.2" cy="599.0" r="2.5"/><circle cx="427.9" cy="602.0" r="2.5"/><circle cx="442.6" cy="604.8" r="2.5"/><circle cx="457.4" cy="607.8" r="2.5"/><circle cx="472.1" cy="610.8" r="2.5"/><circle cx="486.8" cy="613.8" r="2.5"/><circle cx="501.5" cy="616.8" r="2.5"/><circle cx="516.3" cy="619.8" r="2.5"/><circle cx="531.0" cy="620.8" r="2.5"/><circle cx="545.7" cy="622.8" r="2.5"/><circle cx="560.5" cy="623.8" r="2.5"/><circle cx="575.2" cy="624.8" r="2.5"/><circle cx="589.9" cy="625.8" r="2.5"/><circle cx="604.6" cy="625.8" r="2.5"/><circle cx="619.4" cy="626.8" r="2.5"/><circle cx="634.1" cy="627.8" r="2.5"/><circle cx="648.8" cy="628.8" r="2.5"/><circle cx="663.5" cy="629.0" r="2.5"/><circle cx="678.3" cy="630.0" r="2.5"/><circle cx="693.0" cy="630.0" r="2.5"/><circle cx="707.7" cy="629.0" r="2.5"/><circle cx="722.5" cy="628.0" r="2.5"/><circle cx="737.2" cy="627.0" r="2.5"/><circle cx="751.9" cy="626.0" r="2.5"/><circle cx="766.6" cy="625.0" r="2.5"/><circle cx="781.4" cy="623.0" r="2.5"/><circle cx="796.1" cy="622.0" r="2.5"/><circle cx="810.8" cy="621.0" r="2.5"/><circle cx="825.5" cy="620.0" r="2.5"/><circle cx="840.3" cy="619.0" r="2.5"/><circle cx="855.0" cy="618.0" r="2.5"/><circle cx="869.7" cy="616.0" r="2.5"/><circle cx="884.5" cy="614.0" r="2.5"/><circle cx="899.2" cy="612.0" r="2.5"/><circle cx="913.9" cy="610.0" r="2.5"/><circle cx="928.6" cy="607.0" r="2.5"/><circle cx="943.4" cy="605.0" r="2.5"/><circle cx="958.1" cy="603.0" r="2.5"/><circle cx="972.8" cy="601.0" r="2.5"/><circle cx="987.5" cy="598.0" r="2.5"/><circle cx="1002.3" cy="596.0" r="2.5"/><circle cx="1017.0" cy="594.0" r="2.5"/><circle cx="1031.7" cy="592.0" r="2.5"/><circle cx="1046.5" cy="589.0" r="2.5"/><circle cx="1061.2" cy="587.0" r="2.5"/><circle cx="1075.9" cy="585.0" r="2.5"/><circle cx="1090.6" cy="584.0" r="2.5"/><circle cx="1105.4" cy="582.0" r="2.5"/><circle cx="1120.1" cy="580.0" r="2.5"/><circle cx="1134.8" cy="578.0" r="2.5"/><circle cx="1149.5" cy="576.0" r="2.5"/><circle cx="1164.3" cy="574.0" r="2.5"/><circle cx="1179.0" cy="572.0" r="2.5"/><circle cx="1193.7" cy="570.0" r="2.5"/><circle cx="1208.5" cy="568.0" r="2.5"/><circle cx="1223.2" cy="566.0" r="2.5"/><circle cx="1237.9" cy="565.0" r="2.5"/><circle cx="1252.6" cy="563.0" r="2.5"/><circle cx="1267.4" cy="561.0" r="2.5"/><circle cx="1282.1" cy="559.0" r="2.5"/><circle cx="1296.8" cy="557.0" r="2.5"/><circle cx="1311.5" cy="555.0" r="2.5"/><circle cx="1326.3" cy="553.0" r="2.5"/><circle cx="1341.0" cy="551.0" r="2.5"/><circle cx="1355.7" cy="549.0" r="2.5"/><circle cx="1370.5" cy="548.0" r="2.5"/><circle cx="1385.2" cy="546.0" r="2.5"/><circle cx="1399.9" cy="544.0" r="2.5"/><circle cx="1414.6" cy="542.0" r="2.5"/><circle cx="1429.4" cy="540.0" r="2.5"/><circle cx="1444.1" cy="538.0" r="2.5"/><circle cx="1458.8" cy="536.0" r="2.5"/><circle cx="1473.5" cy="535.0" r="2.5"/><circle cx="1488.3" cy="533.0" r="2.5"/><circle cx="1503.0" cy="531.0" r="2.5"/><circle cx="1517.7" cy="529.0" r="2.5"/><circle cx="1532.5" cy="527.0" r="2.5"/><circle cx="1547.2" cy="525.0" r="2.5"/><circle cx="1561.9" cy="524.0" r="2.5"/><circle cx="1576.6" cy="522.0" r="2.5"/><circle cx="1591.4" cy="521.0" r="2.5"/><circle cx="1606.1" cy="521.0" r="2.5"/><circle cx="1620.8" cy="520.0" r="2.5"/><circle cx="1635.5" cy="519.0" r="2.5"/><circle cx="1650.3" cy="518.0" r="2.5"/><circle cx="1665.0" cy="518.0" r="2.5"/><circle cx="1679.7" cy="517.0" r="2.5"/><circle cx="1694.5" cy="516.0" r="2.5"/><circle cx="1709.2" cy="515.0" r="2.5"/><circle cx="1723.9" cy="514.0" r="2.5"/><circle cx="1738.6" cy="514.0" r="2.5"/><circle cx="1753.4" cy="513.0" r="2.5"/><circle cx="1768.1" cy="512.0" r="2.5"/><circle cx="1782.8" cy="511.0" r="2.5"/><circle cx="1797.5" cy="511.0" r="2.5"/>
</g>
<g fill="#4eb0c8" stroke="none"><polyline points="221.7,717.0 236.5,705.0 251.2,691.0 265.9,687.0 280.6,683.0 295.4,680.8 310.1,682.0 324.8,683.0 339.5,685.0 354.3,686.0 369.0,687.0 383.7,687.0 398.5,686.0 413.2,687.0 427.9,688.0 442.6,689.0 457.4,689.0 472.1,688.0 486.8,688.0 501.5,688.0 516.3,688.0 531.0,688.0 545.7,687.0 560.5,686.0 575.2,684.0 589.9,682.0 604.6,680.0 619.4,678.0 634.1,677.0 648.8,675.0 663.5,674.0 678.3,674.0 693.0,672.0 707.7,671.0 722.5,669.0 737.2,666.0 751.9,664.0 766.6,662.0 781.4,659.0 796.1,658.0 810.8,656.0 825.5,654.0 840.3,652.0 855.0,650.0 869.7,648.0 884.5,646.0 899.2,643.0 913.9,640.0 928.6,638.0 943.4,636.0 958.1,634.0 972.8,631.0 987.5,629.0 1002.3,626.0 1017.0,624.0 1031.7,622.0 1046.5,620.0 1061.2,618.0 1075.9,616.0 1090.6,614.0 1105.4,613.0 1120.1,612.0 1134.8,611.0 1149.5,609.0 1164.3,608.0 1179.0,606.0 1193.7,605.0 1208.5,603.0 1223.2,602.0 1237.9,600.0 1252.6,598.0 1267.4,596.0 1282.1,595.0 1296.8,593.0 1311.5,591.0 1326.3,590.0 1341.0,588.0 1355.7,587.0 1370.5,585.0 1385.2,584.0 1399.9,582.0 1414.6,580.0 1429.4,578.0 1444.1,576.0 1458.8,574.0 1473.5,573.0 1488.3,571.0 1503.0,569.0 1517.7,567.0 1532.5,565.0 1547.2,563.0 1561.9,562.0 1576.6,560.0 1591.4,559.0 1606.1,558.0 1620.8,557.0 1635.5,557.0 1650.3,556.0 1665.0,555.0 1679.7,554.0 1694.5,554.0 1709.2,553.0 1723.9,552.0 1738.6,551.0 1753.4,551.0 1768.1,550.0 1782.8,549.0 1797.5,548.0" fill="none" stroke="#4eb0c8" stroke-width="1.6" stroke-linejoin="round"/>
<circle cx="221.7" cy="717.0" r="2.5"/><circle cx="236.5" cy="705.0" r="2.5"/><circle cx="251.2" cy="691.0" r="2.5"/><circle cx="265.9" cy="687.0" r="2.5"/><circle cx="280.6" cy="683.0" r="2.5"/><circle cx="295.4" cy="680.8" r="2.5"/><circle cx="310.1" cy="682.0" r="2.5"/><circle cx="324.8" cy="683.0" r="2.5"/><circle cx="339.5" cy="685.0" r="2.5"/><circle cx="354.3" cy="686.0" r="2.5"/><circle cx="369.0" cy="687.0" r="2.5"/><circle cx="383.7" cy="687.0" r="2.5"/><circle cx="398.5" cy="686.0" r="2.5"/><circle cx="413.2" cy="687.0" r="2.5"/><circle cx="427.9" cy="688.0" r="2.5"/><circle cx="442.6" cy="689.0" r="2.5"/><circle cx="457.4" cy="689.0" r="2.5"/><circle cx="472.1" cy="688.0" r="2.5"/><circle cx="486.8" cy="688.0" r="2.5"/><circle cx="501.5" cy="688.0" r="2.5"/><circle cx="516.3" cy="688.0" r="2.5"/><circle cx="531.0" cy="688.0" r="2.5"/><circle cx="545.7" cy="687.0" r="2.5"/><circle cx="560.5" cy="686.0" r="2.5"/><circle cx="575.2" cy="684.0" r="2.5"/><circle cx="589.9" cy="682.0" r="2.5"/><circle cx="604.6" cy="680.0" r="2.5"/><circle cx="619.4" cy="678.0" r="2.5"/><circle cx="634.1" cy="677.0" r="2.5"/><circle cx="648.8" cy="675.0" r="2.5"/><circle cx="663.5" cy="674.0" r="2.5"/><circle cx="678.3" cy="674.0" r="2.5"/><circle cx="693.0" cy="672.0" r="2.5"/><circle cx="707.7" cy="671.0" r="2.5"/><circle cx="722.5" cy="669.0" r="2.5"/><circle cx="737.2" cy="666.0" r="2.5"/><circle cx="751.9" cy="664.0" r="2.5"/><circle cx="766.6" cy="662.0" r="2.5"/><circle cx="781.4" cy="659.0" r="2.5"/><circle cx="796.1" cy="658.0" r="2.5"/><circle cx="810.8" cy="656.0" r="2.5"/><circle cx="825.5" cy="654.0" r="2.5"/><circle cx="840.3" cy="652.0" r="2.5"/><circle cx="855.0" cy="650.0" r="2.5"/><circle cx="869.7" cy="648.0" r="2.5"/><circle cx="884.5" cy="646.0" r="2.5"/><circle cx="899.2" cy="643.0" r="2.5"/><circle cx="913.9" cy="640.0" r="2.5"/><circle cx="928.6" cy="638.0" r="2.5"/><circle cx="943.4" cy="636.0" r="2.5"/><circle cx="958.1" cy="634.0" r="2.5"/><circle cx="972.8" cy="631.0" r="2.5"/><circle cx="987.5" cy="629.0" r="2.5"/><circle cx="1002.3" cy="626.0" r="2.5"/><circle cx="1017.0" cy="624.0" r="2.5"/><circle cx="1031.7" cy="622.0" r="2.5"/><circle cx="1046.5" cy="620.0" r="2.5"/><circle cx="1061.2" cy="618.0" r="2.5"/><circle cx="1075.9" cy="616.0" r="2.5"/><circle cx="1090.6" cy="614.0" r="2.5"/><circle cx="1105.4" cy="613.0" r="2.5"/><circle cx="1120.1" cy="612.0" r="2.5"/><circle cx="1134.8" cy="611.0" r="2.5"/><circle cx="1149.5" cy="609.0" r="2.5"/><circle cx="1164.3" cy="608.0" r="2.5"/><circle cx="1179.0" cy="606.0" r="2.5"/><circle cx="1193.7" cy="605.0" r="2.5"/><circle cx="1208.5" cy="603.0" r="2.5"/><circle cx="1223.2" cy="602.0" r="2.5"/><circle cx="1237.9" cy="600.0" r="2.5"/><circle cx="1252.6" cy="598.0" r="2.5"/><circle cx="1267.4" cy="596.0" r="2.5"/><circle cx="1282.1" cy="595.0" r="2.5"/><circle cx="1296.8" cy="593.0" r="2.5"/><circle cx="1311.5" cy="591.0" r="2.5"/><circle cx="1326.3" cy="590.0" r="2.5"/><circle cx="1341.0" cy="588.0" r="2.5"/><circle cx="1355.7" cy="587.0" r="2.5"/><circle cx="1370.5" cy="585.0" r="2.5"/><circle cx="1385.2" cy="584.0" r="2.5"/><circle cx="1399.9" cy="582.0" r="2.5"/><circle cx="1414.6" cy="580.0" r="2.5"/><circle cx="1429.4" cy="578.0" r="2.5"/><circle cx="1444.1" cy="576.0" r="2.5"/><circle cx="1458.8" cy="574.0" r="2.5"/><circle cx="1473.5" cy="573.0" r="2.5"/><circle cx="1488.3" cy="571.0" r="2.5"/><circle cx="1503.0" cy="569.0" r="2.5"/><circle cx="1517.7" cy="567.0" r="2.5"/><circle cx="1532.5" cy="565.0" r="2.5"/><circle cx="1547.2" cy="563.0" r="2.5"/><circle cx="1561.9" cy="562.0" r="2.5"/><circle cx="1576.6" cy="560.0" r="2.5"/><circle cx="1591.4" cy="559.0" r="2.5"/><circle cx="1606.1" cy="558.0" r="2.5"/><circle cx="1620.8" cy="557.0" r="2.5"/><circle cx="1635.5" cy="557.0" r="2.5"/><circle cx="1650.3" cy="556.0" r="2.5"/><circle cx="1665.0" cy="555.0" r="2.5"/><circle cx="1679.7" cy="554.0" r="2.5"/><circle cx="1694.5" cy="554.0" r="2.5"/><circle cx="1709.2" cy="553.0" r="2.5"/><circle cx="1723.9" cy="552.0" r="2.5"/><circle cx="1738.6" cy="551.0" r="2.5"/><circle cx="1753.4" cy="551.0" r="2.5"/><circle cx="1768.1" cy="550.0" r="2.5"/><circle cx="1782.8" cy="549.0" r="2.5"/><circle cx="1797.5" cy="548.0" r="2.5"/>
</g>
<text x="1833" y="103" fill="#d8d8d8" textLength="52" lengthAdjust="spacingAndGlyphs">70.85</text>
<text x="1833" y="232" fill="#d8d8d8" textLength="52" lengthAdjust="spacingAndGlyphs">67.47</text>
<text x="1833" y="360" fill="#d8d8d8" textLength="52" lengthAdjust="spacingAndGlyphs">64.09</text>
<text x="1833" y="488" fill="#d8d8d8" textLength="52" lengthAdjust="spacingAndGlyphs">60.72</text>
<text x="1833" y="616" fill="#d8d8d8" textLength="52" lengthAdjust="spacingAndGlyphs">57.34</text>
<text x="1833" y="744" fill="#d8d8d8" textLength="52" lengthAdjust="spacingAndGlyphs">53.96</text>
<text x="46.0" y="788" fill="#d8d8d8" textLength="76" lengthAdjust="spacingAndGlyphs">2019.04</text>
<text x="163.8" y="788" fill="#d8d8d8" textLength="76" lengthAdjust="spacingAndGlyphs">2019.12</text>
<text x="281.6" y="788" fill="#d8d8d8" textLength="76" lengthAdjust="spacingAndGlyphs">2020.08</text>
<text x="399.5" y="788" fill="#d8d8d8" textLength="76" lengthAdjust="spacingAndGlyphs">2021.04</text>
<text x="517.3" y="788" fill="#d8d8d8" textLength="76" lengthAdjust="spacingAndGlyphs">2021.12</text>
<text x="635.1" y="788" fill="#d8d8d8" textLength="76" lengthAdjust="spacingAndGlyphs">2022.08</text>
<text x="752.9" y="788" fill="#d8d8d8" textLength="76" lengthAdjust="spacingAndGlyphs">2023.04</text>
<text x="870.7" y="788" fill="#d8d8d8" textLength="76" lengthAdjust="spacingAndGlyphs">2023.12</text>
<text x="988.5" y="788" fill="#d8d8d8" textLength="76" lengthAdjust="spacingAndGlyphs">2024.08</text>
<text x="1106.4" y="788" fill="#d8d8d8" textLength="76" lengthAdjust="spacingAndGlyphs">2025.04</text>
<text x="1224.2" y="788" fill="#d8d8d8" textLength="76" lengthAdjust="spacingAndGlyphs">2025.12</text>
<text x="1342.0" y="788" fill="#d8d8d8" textLength="76" lengthAdjust="spacingAndGlyphs">2026.08</text>
<text x="1459.8" y="788" fill="#d8d8d8" textLength="76" lengthAdjust="spacingAndGlyphs">2027.04</text>
<text x="1577.6" y="788" fill="#d8d8d8" textLength="76" lengthAdjust="spacingAndGlyphs">2027.12</text>
<text x="1695.5" y="788" fill="#d8d8d8" textLength="76" lengthAdjust="spacingAndGlyphs">2028.08</text>
<rect x="1828" y="98" width="90" height="29" fill="#343a3c"/>
<rect x="1829" y="99" width="88" height="27" fill="#bd1818"/>
<text x="1830" y="120" fill="#fff" style="font-size:20px" textLength="52" lengthAdjust="spacingAndGlyphs">70.03</text>
<rect x="88" y="766" width="105" height="33" fill="#343a3c"/>
<rect x="89" y="767" width="103" height="31" fill="#bd1818"/>
</svg>
<div class="abs lbl" id="sl0" style="left:16px;"><span class="lat">IPE</span>北海布伦特原油</div>
<div class="abs lbl" style="left:194px;width:96px;color:#45b4d0;"><span class="n">20200210</span></div>
<div class="abs lbl" style="left:290px;width:96px;color:#e5352a;"><span class="n">20200204</span></div>
<div class="abs lbl" style="left:386px;width:96px;color:#1fa45e;"><span class="n">20200110</span></div>
<div class="abs lbl" style="left:482px;width:96px;color:#f58220;"><span class="n">20191111</span></div>
<div class="abs lbl" style="left:578px;width:96px;color:#8a5ccc;"><span class="n">20190809</span></div>
<div class="abs lbl" style="left:674px;width:96px;color:#f7a93a;"><span class="n">20190211</span></div>
<div class="abs" id="legend" style="left:767px;top:47px;width:407px;height:274px;border:1px solid #545454;background:linear-gradient(#4e4e4e,#3b3b3b);">
<div class="abs" style="left:0;top:0;width:407px;height:35px;line-height:38px;background:linear-gradient(#2c2c2c,#393939);text-align:center;font-weight:bold;color:#e0e0e0;">商品远期曲线</div>
<div class="abs sw" style="top:53px;background:#4fb0ca;"></div>
<div class="abs lg" style="top:52px;"><span class="lat">IPE</span>北海布伦特原油 <span class="n">20200210</span></div>
<div class="abs sw" style="top:84px;background:#dc3023;"></div>
<div class="abs lg" style="top:83px;"><span class="lat">IPE</span>北海布伦特原油 <span class="n">20200204</span></div>
<div class="abs sw" style="top:115px;background:#1a9e5f;"></div>
<div class="abs lg" style="top:114px;"><span class="lat">IPE</span>北海布伦特原油 <span class="n">20200110</span></div>
<div class="abs sw" style="top:146px;background:#fb8118;"></div>
<div class="abs lg" style="top:145px;"><span class="lat">IPE</span>北海布伦特原油 <span class="n">20191111</span></div>
<div class="abs sw" style="top:177px;background:#8357c5;"></div>
<div class="abs lg" style="top:176px;"><span class="lat">IPE</span>北海布伦特原油 <span class="n">20190809</span></div>
<div class="abs sw" style="top:208px;background:#f4a83e;"></div>
<div class="abs lg" style="top:207px;"><span class="lat">IPE</span>北海布伦特原油 <span class="n">20190211</span></div>
<div class="abs" style="left:8px;top:238px;width:391px;height:1px;background:#2a2a2a;"></div>
<svg class="abs" style="left:300px;top:240px;" width="107" height="34" viewBox="0 0 107 34">
<rect x="11.75" y="8.75" width="16.5" height="16.5" fill="none" stroke="#117a3d" stroke-width="1.5"/>
<path d="M15.5 12.5 L24.5 21.5 M24.5 12.5 L15.5 21.5" stroke="#117a3d" stroke-width="1.8" fill="none"/>
<g stroke="#c2c2c2" stroke-width="2.3" fill="none"><path d="M48.6 8 V23 H63"/><path d="M45 11.2 H60 V27"/><path d="M49.2 22.2 L61.5 9.8" stroke-width="2.3"/></g>
<g fill="#c2c2c2" stroke="none"><rect x="78.8" y="9" width="2.2" height="18"/><rect x="78.8" y="9" width="17.5" height="2.1"/><path d="M82.4 12.2 H96.2 L82.4 26 Z"/><path d="M88 18 L96 26" stroke="#c2c2c2" stroke-width="2.4" fill="none"/></g>
</svg>
</div>
</body></html>
